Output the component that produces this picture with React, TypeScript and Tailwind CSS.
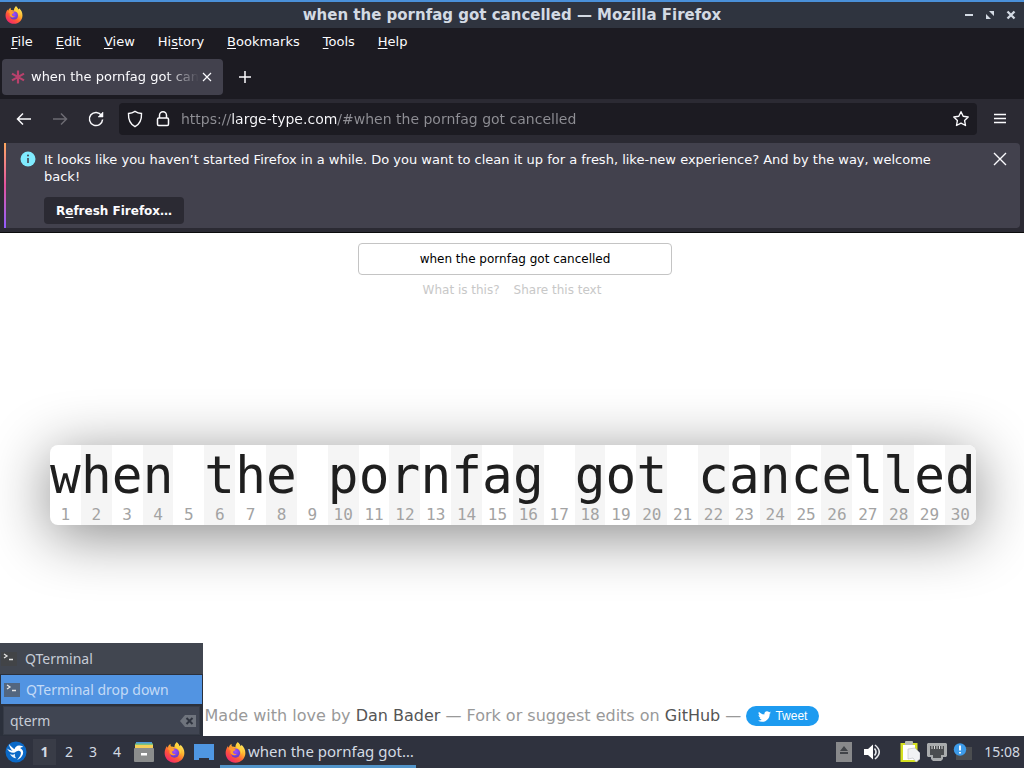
import { ReactNode, useId, useState } from "react";
import { FaTwitter } from "react-icons/fa";

interface IMenu {
  before?: string;
  accessKey: string;
  after: string;
}

const MENUS: IMenu[] = [
  { accessKey: "F", after: "ile" },
  { accessKey: "E", after: "dit" },
  { accessKey: "V", after: "iew" },
  { before: "Hi", accessKey: "s", after: "tory" },
  { accessKey: "B", after: "ookmarks" },
  { accessKey: "T", after: "ools" },
  { accessKey: "H", after: "elp" },
];

const FirefoxLogo = ({ className }: { className: string }) => {
  const id = useId();

  return (
    <svg viewBox="0 0 20 20" className={className} aria-hidden="true">
      <defs>
        <linearGradient id={`${id}-flame`} x1="0.85" y1="0.05" x2="0.2" y2="0.95">
          <stop offset="0" stopColor="#fff36b" />
          <stop offset="0.35" stopColor="#ffb52e" />
          <stop offset="0.65" stopColor="#ff5a36" />
          <stop offset="1" stopColor="#f0246f" />
        </linearGradient>
        <radialGradient id={`${id}-globe`} cx="0.5" cy="0.35" r="0.7">
          <stop offset="0" stopColor="#a04dff" />
          <stop offset="1" stopColor="#5a3ac4" />
        </radialGradient>
      </defs>
      <path
        fill={`url(#${id}-flame)`}
        d="M12.2.2c1.500 1.100 2.300 2.500 2.700 3.800.6-.3.8-.9.8-1.400 2.300 1.900 3.700 4.700 3.700 7.900 0 5.200-4.200 9.300-9.400 9.300S.6 15.700.6 10.500c0-2.900 1-4.700 2.200-6.700.1.700.3 1.200.7 1.600C4 3.600 5 2.500 6.300 1.900c-.2 1-.1 1.900.4 2.500 1.300-.1 2.300.2 3.200.7C9.800 3.200 10.600 1.400 12.200.2z"
      />
      <circle cx="10" cy="10.500" r="4.400" fill={`url(#${id}-globe)`} />
      <path
        fill="#ff9a2e"
        d="M3.600 6.300c1.700-1.200 3.400-.8 4.400.1.900 0 1.800.3 2.100.9-.2.900-2 1.100-2.500 1.900.1 1.800 1.800 2.700 3.600 2.200-1 1.500-3.600 1.800-5.200.3C4.700 10.400 5.200 8.700 5.500 8c-.8-.2-1.400-.8-1.900-1.700z"
      />
      <path fill="#ffd43c" d="M12.200.2c1.500 1.900 1.900 3.600 3 5.100 1.300 1.800 1.300 4.500.2 6.400.2-3-.9-4.500-2.800-5.600-2-1.200-2-4.100-.4-5.900z" />
    </svg>
  );
};

const TerminalIcon = ({ active }: { active?: boolean }) => (
  <svg viewBox="0 0 16 14" className="h-[14px] w-4 shrink-0" aria-hidden="true">
    <rect width="16" height="14" fill={active ? "#53667f" : "#424447"} />
    <path d="M3 2l3 2-3 2" fill="none" stroke="#e4e4e4" strokeWidth="1.300" />
    <path d="M8 7.500h4" stroke="#e4e4e4" strokeWidth="1.500" />
  </svg>
);

const TitleBar = () => (
  <header className="flex h-7 items-center border-t-2 border-[#4a90d9] bg-[#2f343f] pr-[5px] pl-[5px] text-[#d3dae3]">
    <FirefoxLogo className="h-[18px] w-[18px]" />
    <h1 className="flex-1 pl-10 text-center text-[15px] font-bold">when the pornfag got cancelled — Mozilla Firefox</h1>
    <div className="flex gap-[5px]">
      <button aria-label="Minimize">
        <svg viewBox="0 0 16 16" className="h-4 w-4">
          <path d="M4 8h8" stroke="currentColor" strokeWidth="2" />
        </svg>
      </button>
      <button aria-label="Restore">
        <svg viewBox="0 0 16 16" className="h-4 w-4" fill="currentColor">
          <path d="M7 4h5v5zM4 7l5 5H4z" />
        </svg>
      </button>
      <button aria-label="Close">
        <svg viewBox="0 0 16 16" className="h-4 w-4">
          <path d="M4.500 4.500l7 7M11.500 4.500l-7 7" stroke="currentColor" strokeWidth="2.300" />
        </svg>
      </button>
    </div>
  </header>
);

const MenuBar = () => (
  <nav className="flex h-[27px] items-center gap-px text-[13px]">
    {MENUS.map((menu) => (
      <button key={menu.accessKey + menu.after} className="px-[11px]">
        {menu.before}
        <span className="underline underline-offset-2">{menu.accessKey}</span>
        {menu.after}
      </button>
    ))}
  </nav>
);

const TabStrip = () => (
  <div className="flex h-11 items-center gap-3 px-[2px]">
    <div className="flex h-9 w-[221px] items-center rounded bg-[#42414d] pr-2 pl-2">
      <svg viewBox="0 0 16 16" className="mr-[5px] h-4 w-4 shrink-0" stroke="#b9416c" strokeWidth="2.200" aria-hidden="true">
        <path d="M8 1.500v13M2 4.600l12 6.800M14 4.600L2 11.400" />
      </svg>
      <span className="flex-1 overflow-hidden text-[13px] whitespace-nowrap [mask-image:linear-gradient(to_right,black_80%,transparent)]">
        when the pornfag got cancelled
      </span>
      <button aria-label="Close tab">
        <svg viewBox="0 0 16 16" className="h-4 w-4" stroke="#fbfbfe" strokeWidth="1.200">
          <path d="M4 4l8 8M12 4l-8 8" />
        </svg>
      </button>
    </div>
    <button aria-label="New tab">
      <svg viewBox="0 0 20 20" className="h-5 w-5" stroke="#fbfbfe" strokeWidth="1.500">
        <path d="M10 4v12M4 10h12" />
      </svg>
    </button>
  </div>
);

const NavigationBar = () => (
  <div className="flex h-10 items-center bg-[#2b2a33] px-[14px]">
    <div className="flex gap-4 pr-[13px]">
      <button aria-label="Back">
        <svg viewBox="0 0 20 20" className="h-5 w-5" fill="none" stroke="#fbfbfe" strokeWidth="1.500">
          <path d="M17 10H4M9 4.500L3.500 10 9 15.500" />
        </svg>
      </button>
      <button aria-label="Forward" disabled>
        <svg viewBox="0 0 20 20" className="h-5 w-5" fill="none" stroke="#6c6b73" strokeWidth="1.500">
          <path d="M3 10h13M11 4.500l5.500 5.500-5.500 5.500" />
        </svg>
      </button>
      <button aria-label="Reload">
        <svg viewBox="0 0 20 20" className="h-5 w-5" fill="none" stroke="#fbfbfe" strokeWidth="1.500">
          <path d="M15.500 6.300A6.600 6.600 0 1 0 16.600 10.500" />
          <path d="M17 3v5h-5z" fill="#fbfbfe" strokeWidth="0.500" />
        </svg>
      </button>
    </div>
    <div className="flex h-8 flex-1 items-center rounded bg-[#1c1b22] px-[6px]">
      <button aria-label="Tracking protection">
        <svg viewBox="0 0 20 20" className="h-5 w-5" fill="none" stroke="#fbfbfe" strokeWidth="1.400">
          <path d="M10 2.300c2 1.300 4 2 6.500 2.200.3 6-1.500 10.500-6.500 13.200-5-2.700-6.800-7.200-6.500-13.200C6 4.300 8 3.600 10 2.300z" />
        </svg>
      </button>
      <button aria-label="Site information" className="ml-2">
        <svg viewBox="0 0 20 20" className="h-5 w-5" fill="none" stroke="#fbfbfe" strokeWidth="1.500">
          <rect x="4.500" y="9" width="11" height="7.500" rx="1.200" />
          <path d="M6.500 9V6.200a3.500 3.500 0 0 1 7 0V9" />
        </svg>
      </button>
      <input
        aria-label="Address"
        defaultValue="https://large-type.com/#when the pornfag got cancelled"
        className="ml-2 min-w-0 flex-1 bg-[linear-gradient(to_right,#8f8f95_50px,#fbfbfe_50px,#fbfbfe_156px,#8f8f95_156px)] bg-clip-text text-sm text-transparent caret-white outline-none"
      />
      <button aria-label="Bookmark this page">
        <svg viewBox="0 0 20 20" className="h-5 w-5" fill="none" stroke="#fbfbfe" strokeWidth="1.400" strokeLinejoin="round">
          <path d="M10 2.700l2.200 4.600 5 .7-3.600 3.500.9 5-4.500-2.400-4.500 2.400.9-5L2.800 8l5-.7z" />
        </svg>
      </button>
    </div>
    <button aria-label="Open application menu" className="ml-[13px]">
      <svg viewBox="0 0 20 20" className="h-5 w-5" stroke="#fbfbfe" strokeWidth="1.500">
        <path d="M4 5.500h12M4 9.500h12M4 13.500h12" />
      </svg>
    </button>
  </div>
);

const Notification = () => (
  <section className="border-b border-[#0c0c0d] bg-[#2b2a33] p-1">
    <div className="flex rounded-r bg-[#42414d]">
      <div className="w-[2px] bg-linear-to-b from-[#ffa95c] via-[#e3509e] to-[#9059ff]" />
      <svg viewBox="0 0 16 16" className="mt-2 ml-[14px] h-4 w-4 shrink-0" aria-hidden="true">
        <circle cx="8" cy="8" r="7.500" fill="#80ebff" />
        <path d="M8 7v5" stroke="#42414d" strokeWidth="1.600" />
        <circle cx="8" cy="4.500" r="1" fill="#42414d" />
      </svg>
      <div className="ml-2 flex-1 pt-2 pb-1">
        <p className="text-[13px] leading-[17px]">
          It looks like you haven’t started Firefox in a while. Do you want to clean it up for a fresh, like-new
          experience? And by the way, welcome back!
        </p>
        <button className="mt-3 h-[27px] rounded bg-[#2b2a33] px-3 text-xs font-bold">
          R<span className="underline underline-offset-2">e</span>fresh Firefox…
        </button>
      </div>
      <button aria-label="Close message" className="mt-[6px] mr-[10px] ml-9 self-start">
        <svg viewBox="0 0 20 20" className="h-5 w-5" stroke="#fbfbfe" strokeWidth="1.400">
          <path d="M4 4l12 12M16 4L4 16" />
        </svg>
      </button>
    </div>
  </section>
);

const LargeType = ({ text }: { text: string }) => (
  <div className="mr-12 ml-[50px] flex rounded-lg bg-white shadow-[0_10px_60px_rgba(0,0,0,0.48)]">
    {text.split("").map((char, index) => (
      <div
        key={index}
        className="flex min-w-0 flex-1 flex-col items-center pt-[2px] font-['DejaVu_Sans_Mono',monospace] first:rounded-l-lg last:rounded-r-lg even:bg-[#f5f5f5]"
      >
        <span className="text-[51px] leading-[58px] whitespace-pre text-[#1f1f1f]">{char}</span>
        <span className="text-base leading-5 text-[#a3a3a3]">{index + 1}</span>
      </div>
    ))}
  </div>
);

const Page = () => {
  const [text, setText] = useState("when the pornfag got cancelled");

  return (
    <main className="flex flex-1 flex-col bg-white text-xs">
      <div className="flex flex-col items-center pt-[10px] pl-[6px]">
        <input
          aria-label="Text to enlarge"
          value={text}
          onChange={(e) => setText(e.target.value)}
          className="h-8 w-[314px] rounded-sm border border-[#c4c4c4] text-center text-black outline-none"
        />
        <div className="mt-[7px] mr-[6px] flex gap-[14px] text-[#c8c8c8]">
          <a href="#about">What is this?</a>
          <a href="#share">Share this text</a>
        </div>
      </div>

      <div className="flex flex-1 flex-col justify-center pt-[2px]">
        <LargeType text={text} />
      </div>

      <footer className="flex h-[66px] items-center justify-center pt-[26px] text-base whitespace-pre text-[#999]">
        Made with love by{" "}
        <a href="#author" className="text-[#555]">
          Dan Bader
        </a>
        {" — Fork or suggest edits on "}
        <a href="#source" className="text-[#555]">
          GitHub
        </a>
        {" — "}
        <button className="flex h-5 items-center gap-1 rounded-full bg-[#1d9bf0] px-3 font-['Liberation_Sans',sans-serif] text-xs text-white">
          <FaTwitter className="h-[13px] w-[13px]" />
          Tweet
        </button>
      </footer>
    </main>
  );
};

const Launcher = () => (
  <div className="absolute bottom-8 left-0 w-[203px] bg-[#2b303b] font-['Noto_Sans',sans-serif] text-sm text-[#c6ccd6]">
    <button className="flex h-[31px] w-full items-center gap-2 bg-[#414650] pl-[1px]">
      <TerminalIcon />
      QTerminal
    </button>
    <button className="m-[1px] flex h-[29px] w-[201px] items-center gap-[6px] bg-[#5294e2] pl-[3px] text-[#c3daf6]">
      <TerminalIcon active />
      QTerminal drop down
    </button>
    <div className="mx-[3px] mt-[2px] mb-[1px] flex h-[29px] items-center border border-[#363b46] bg-[#404552] pr-[3px] pl-[6px]">
      <input aria-label="Run application" defaultValue="qterm" className="min-w-0 flex-1 bg-transparent outline-none" />
      <button aria-label="Clear">
        <svg viewBox="0 0 16 12" className="h-3 w-4">
          <path d="M5 0h11v12H5L0 6z" fill="#6f747d" />
          <path d="M6.500 3l6 6M12.500 3l-6 6" stroke="#2f343f" strokeWidth="2" />
        </svg>
      </button>
    </div>
  </div>
);

const PanelButton = ({ label, children }: { label: string; children: ReactNode }) => (
  <button aria-label={label} className="flex h-8 w-[30px] items-center justify-center">
    {children}
  </button>
);

const Taskbar = () => (
  <footer className="flex h-8 items-center bg-[#2f323e] font-['Noto_Sans',sans-serif] text-sm text-[#d3dae3]">
    <button aria-label="Application menu" className="ml-[5px]">
      <svg viewBox="0 0 22 22" className="h-[22px] w-[22px]">
        <circle cx="11" cy="11" r="10.500" fill="#0b69c7" />
        <path
          d="M4 3c2 2.500 3.500 4 5.500 5.300C10 6 11.500 4.500 14 4.400c2.200-.1 3.700.8 4.300 1.600-1.400 0-2.400.3-3.100.9 2.300 1.300 3.600 3.400 2.700 6.300-.9 2.700-3.200 4.600-5.700 5.700 1.600-2.100 3.500-4 3.700-6.300.2-2.200-1.300-3.200-3.300-2.700-1 .3-1.900.8-2.700 1.500C7 12.300 3.500 11 2 7.500c2 1.400 3.800 2 5.600 2.200C5.600 8.200 4.200 5.800 4 3z"
          fill="#fff"
        />
        <path d="M5 13c1.700 1 3.500 1 5-.2-.3 1.800 0 3.400 1.200 4.500C8.500 17.200 6.200 15.700 5 13z" fill="#e3effb" />
      </svg>
    </button>
    <nav className="ml-[6px] flex" aria-label="Workspaces">
      {[1, 2, 3, 4].map((workspace) => (
        <button
          key={workspace}
          className={workspace === 1 ? "mr-[1px] h-[26px] w-[23px] bg-[#393c47] font-bold" : "w-6"}
        >
          {workspace}
        </button>
      ))}
    </nav>
    <PanelButton label="Files">
      <svg viewBox="0 0 20 20" className="h-5 w-5">
        <rect x="2" width="16" height="3" fill="#4c9ad8" />
        <rect x="1" y="1.500" width="18" height="3" fill="#7fc27b" />
        <rect x="1" y="3" width="18" height="4" fill="#f4cf58" />
        <rect y="6" width="20" height="14" rx="1" fill="#8b8d8d" />
        <rect x="7" y="11" width="6" height="2.500" fill="#fff" />
      </svg>
    </PanelButton>
    <PanelButton label="Firefox">
      <FirefoxLogo className="h-[21px] w-[21px]" />
    </PanelButton>
    <PanelButton label="Show desktop">
      <svg viewBox="0 0 20 16" className="h-4 w-5">
        <path d="M0 0h20v16h-5v-2H5v2H0z" fill="#4f97e3" />
      </svg>
    </PanelButton>
    <button className="ml-[1px] flex h-8 w-[196px] items-center border-b-[3px] border-[#5294c9] pt-[3px] pl-[5px] text-[15px]">
      <FirefoxLogo className="mr-[2px] h-[21px] w-[21px] shrink-0" />
      <span className="whitespace-nowrap">when the pornfag got…</span>
    </button>

    <div className="ml-auto flex items-center pr-1">
      <button aria-label="Removable media">
        <svg viewBox="0 0 16 20" className="h-5 w-4">
          <rect width="16" height="20" fill="#88898b" />
          <path d="M8 4l4 5H4zM4 10h8v2H4z" fill="#414449" />
        </svg>
      </button>
      <button aria-label="Volume" className="ml-3">
        <svg viewBox="0 0 18 16" className="h-4 w-[18px]">
          <path d="M0 5h4l5-4.500v15L4 11H0z" fill="#fff" />
          <path d="M10.500 4.500q3 3.500 0 7M11 1q8.500 7 0 14" fill="none" stroke="#e8eaed" strokeWidth="1.600" />
        </svg>
      </button>
      <button aria-label="Clipboard" className="ml-[18px]">
        <svg viewBox="0 0 20 22" className="h-[22px] w-5">
          <rect x="0.500" y="2" width="17" height="19" fill="#d5e021" />
          <path d="M3 4h12v15H3z" fill="#fff" />
          <rect x="5" width="8" height="4" rx="1" fill="#b9bdb4" />
          <path d="M8 8l7-1 5 5v6l-4 3-3-4-5 1z" fill="#f1f2f4" stroke="#b9bbc0" strokeWidth="0.600" />
        </svg>
      </button>
      <button aria-label="Network" className="ml-[7px]">
        <svg viewBox="0 0 20 18" className="h-[18px] w-5">
          <path d="M1 0h18l1 1v12l-1 1h-3v2l-2 2H6l-2-2v-2H1l-1-1V1z" fill="#a9abad" />
          <path d="M3 3h14v9h-3v3H6v-3H3z" fill="#4b4d50" />
          <path d="M5 3v3M7.500 3v3M10 3v3M12.500 3v3M15 3v3" stroke="#d8d9da" />
        </svg>
      </button>
      <button aria-label="Notifications" className="ml-[6px]">
        <svg viewBox="0 0 20 18" className="h-[18px] w-5">
          <rect x="3" y="4" width="16" height="13" fill="#4b4d50" />
          <circle cx="7" cy="6.500" r="6.200" fill="#3d9be9" />
          <path d="M7 2.500v5M7 9v1.500" stroke="#fff" strokeWidth="1.800" />
        </svg>
      </button>
      <time className="ml-[11px]">15:08</time>
    </div>
  </footer>
);

const App = () => (
  <div className="relative flex min-h-screen flex-col font-['DejaVu_Sans',sans-serif]">
    <TitleBar />
    <div className="bg-[#1c1b22] text-[#fbfbfe]">
      <MenuBar />
      <TabStrip />
      <NavigationBar />
      <Notification />
    </div>
    <Page />
    <Taskbar />
    <Launcher />
  </div>
);

export default App;
